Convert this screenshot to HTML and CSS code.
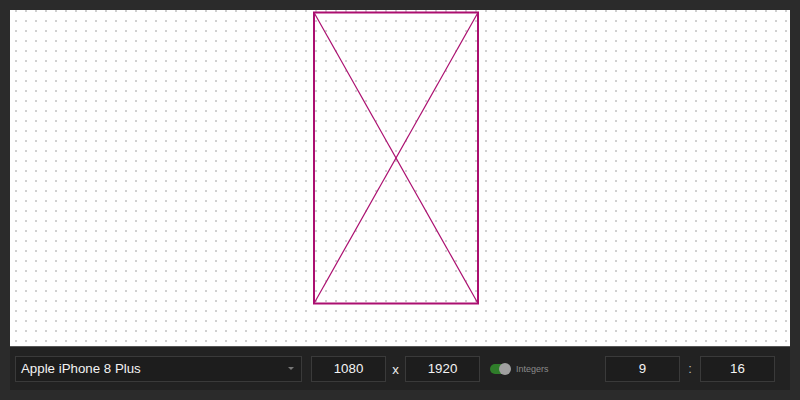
FILE: index.html
```html
<!DOCTYPE html>
<html>
<head>
<meta charset="utf-8">
<link rel="stylesheet" href="styles.css">
</head>
<body>
<div class="app">
  <div class="canvas">
    <svg class="frame" width="780" height="336" viewBox="0 0 780 336">
      <line x1="304" y1="2.5" x2="468" y2="293.5" stroke="#ab0f70" stroke-width="1.2"/>
      <line x1="468" y1="2.5" x2="304" y2="293.5" stroke="#ab0f70" stroke-width="1.2"/>
      <rect x="304" y="2.5" width="164" height="291" fill="none" stroke="#ab0f70" stroke-width="2"/>
    </svg>
  </div>
  <div class="panel">
    <div class="select">
      <span class="select-text">Apple iPhone 8 Plus</span>
      <span class="caret"></span>
    </div>
    <div class="field dim-w">1080</div>
    <span class="sep-x">x</span>
    <div class="field">1920</div>
    <div class="toggle"><span class="knob"></span></div>
    <span class="toggle-label">Integers</span>
    <div class="field">9</div>
    <span class="sep-colon">:</span>
    <div class="field">16</div>
  </div>
</div>
</body>
</html>
```
FILE: styles.css
```css
html, body {
  margin: 0;
  padding: 0;
  background: #2b2b2b;
  font-family: "Liberation Sans", Arial, sans-serif;
}
.app {
  width: 780px;
  padding: 10px;
}
.canvas {
  height: 336px;
  background-color: #ffffff;
  background-image: radial-gradient(circle at 6px 1px, #c8c8c8 0, #d2d2d2 0.9px, rgba(255,255,255,0) 1.5px);
  background-size: 10px 10px;
  border-bottom: 1px solid #555555;
}
.frame {
  display: block;
}
.panel {
  height: 43px;
  background: #222222;
  display: flex;
  align-items: center;
  padding: 0 14px 0 5px;
  box-sizing: border-box;
  width: 780px;
}
.select {
  width: 287px;
  height: 26px;
  box-sizing: border-box;
  background: #1d1d1d;
  border: 1px solid #3a3a3a;
  display: flex;
  align-items: center;
  padding: 0 7px 0 5px;
  color: #f2f2f2;
  font-size: 13.3px;
}
.select-text {
  flex: 1;
}
.caret {
  width: 0;
  height: 0;
  border-left: 3px solid transparent;
  border-right: 3px solid transparent;
  border-top: 3px solid #777777;
}
.field {
  width: 75px;
  height: 26px;
  box-sizing: border-box;
  background: #1d1d1d;
  border: 1px solid #3a3a3a;
  color: #f4f4f4;
  font-size: 13.3px;
  display: flex;
  align-items: center;
  justify-content: center;
}
.dim-w {
  margin-left: 9px;
}
.sep-x {
  width: 19px;
  text-align: center;
  color: #eeeeee;
  font-size: 13.3px;
  margin-top: 1px;
}
.toggle {
  margin-left: 10px;
  width: 20px;
  height: 10px;
  border-radius: 5px;
  background: #2f7d2a;
  position: relative;
}
.knob {
  position: absolute;
  right: -1px;
  top: -1px;
  width: 12px;
  height: 12px;
  border-radius: 50%;
  background: #a0a0a0;
}
.toggle-label {
  margin-left: 6px;
  font-size: 9px;
  color: #8a8a8a;
  width: 89px;
}
.sep-colon {
  width: 20px;
  text-align: center;
  color: #bbbbbb;
  font-size: 13px;
}
```
